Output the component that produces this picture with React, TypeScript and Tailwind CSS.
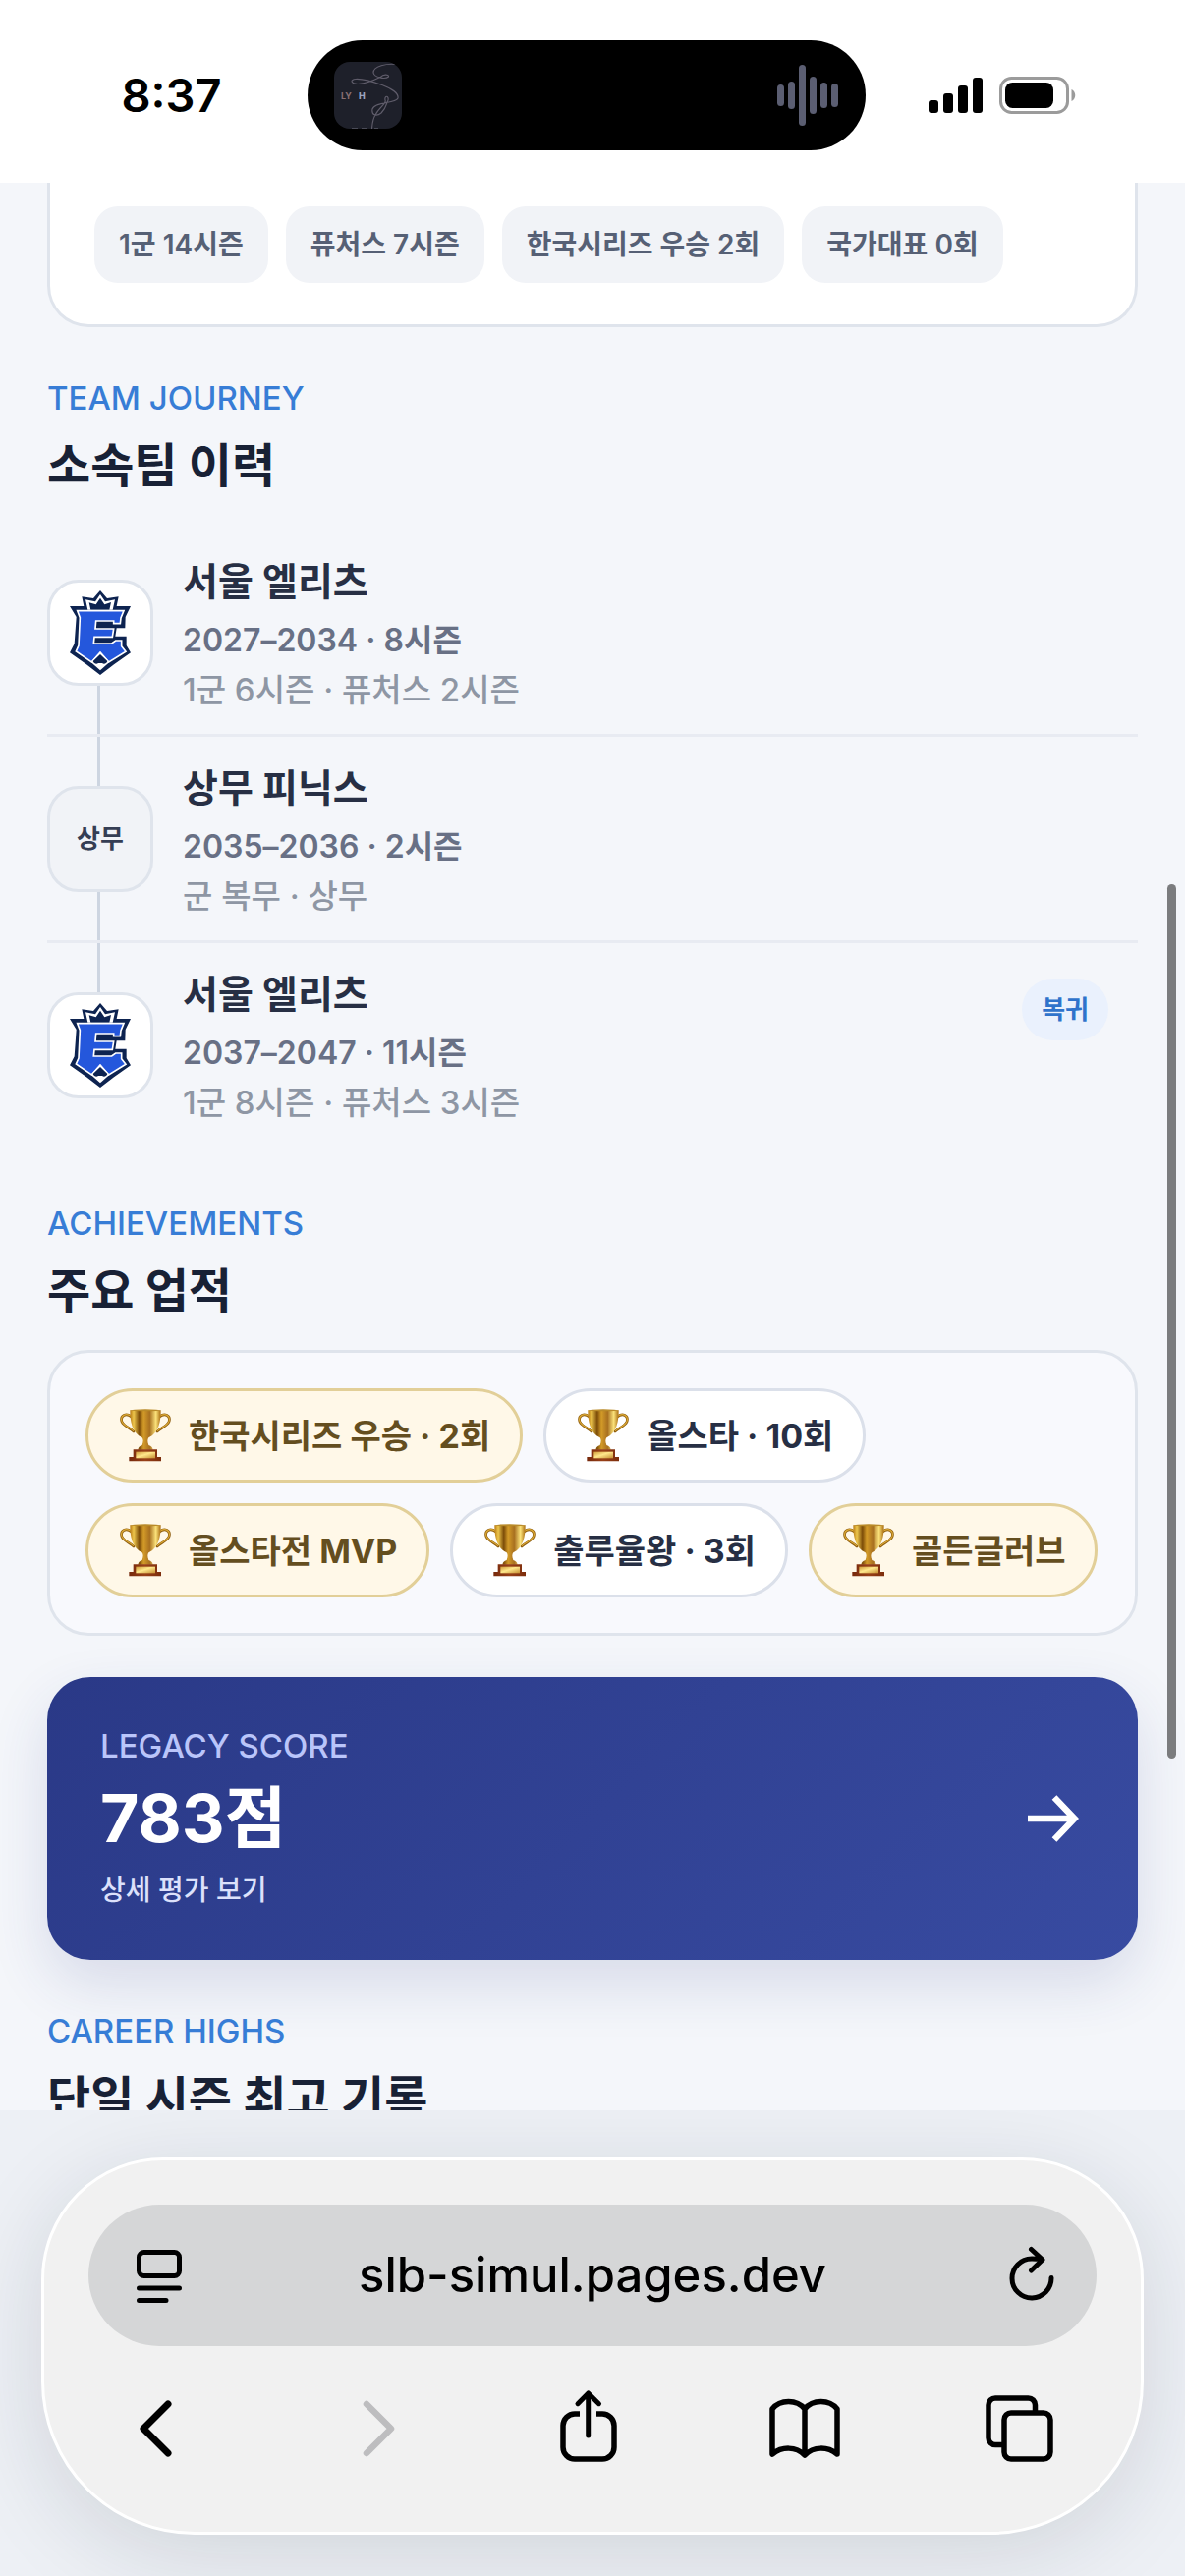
import type { ReactNode } from "react";

function AlbumArt() {
  return (
    <svg viewBox="0 0 69 68" className="h-[68px] w-[69px] rounded-2xl bg-[#1e202a]" aria-hidden="true">
      <path
        d="M63 2.5C54 1.500 40 4 40 11C41 16 52 18 55.500 15C56 12 49 13 48 15C42 18 34 22 24 22.500C17 22 16 18 22 17.500C32 17 42 21 50 24C58 27 66 32 65 37C62 43 42 40 39 48C38 54 43 56 48 52C54 46 53 42 55 39C56 34 51 34 52 39C54 42 46 46 42 54C39 59 39 63 38.500 68"
        fill="none"
        stroke="#5f5c6a"
        strokeWidth="1.200"
      />
      <text x="7" y="38" fontSize="9" fontWeight="700" fill="#8a7072">
        LY
      </text>
      <text x="25" y="38" fontSize="9" fontWeight="800" fill="#9aa2bd">
        H
      </text>
      <path d="M18 67.500h6m4 0h5m8 0h4" stroke="#4a4b57" strokeWidth="1" />
    </svg>
  );
}

function Waveform() {
  const bars = [22, 28, 62, 38, 26, 24];
  return (
    <svg viewBox="0 0 62 62" className="h-[62px] w-[62px]" aria-hidden="true">
      {bars.map((h, i) => (
        <rect key={i} x={i * 11} y={31 - h / 2} width="7" height={h} rx="3.5" fill="#5b5e72" />
      ))}
    </svg>
  );
}

function StatusBar() {
  return (
    <header className="flex h-[186px] shrink-0 items-center bg-white pt-2">
      <div className="flex flex-1 justify-center pl-9">
        <time className="text-[47px] font-semibold text-black">8:37</time>
      </div>
      <div className="flex h-28 w-[568px] items-center justify-between rounded-full bg-black pr-7 pl-[27px]">
        <AlbumArt />
        <Waveform />
      </div>
      <div className="flex flex-1 items-center justify-center gap-4 pr-12">
        <svg viewBox="0 0 56 36" className="h-9 w-14" aria-hidden="true">
          <rect x="0" y="23" width="10" height="13" rx="3" />
          <rect x="15" y="16" width="10" height="20" rx="3" />
          <rect x="30" y="8" width="10" height="28" rx="3" />
          <rect x="45" y="0" width="10" height="36" rx="3" />
        </svg>
        <svg viewBox="0 0 78 38" className="h-[38px] w-[78px]" aria-hidden="true">
          <rect x="1.500" y="1.500" width="68" height="35" rx="11" fill="none" stroke="#9b9b9b" strokeWidth="3" />
          <rect x="6" y="6" width="49" height="26" rx="7.500" />
          <path d="M73.500 13v12c5-2 5-10 0-12z" fill="#9b9b9b" />
        </svg>
      </div>
    </header>
  );
}

function ElitesLogo() {
  return (
    <svg viewBox="93 122 186 258" className="h-[86px] w-[62px]" role="img" aria-label="서울 엘리츠">
      <path
        fill="#0d2350"
        d="M186 122L207 146L242 141L236 170H279L263 203L262 237H236L232 262H266V290L279 312L228 348L186 380L144 348L93 312L107 285L113 203L93 170H136L130 141L165 146Z"
      />
      <path fill="#fff" d="M186 134L201 156L231 150L224 181H148L141 150L171 156Z" />
      <path fill="#0d2350" d="M186 145L199 165L219 158L214 181H157L152 159L173 165Z" />
      <path
        fill="#2457dc"
        stroke="#fff"
        strokeWidth="5"
        d="M116 184H258L249 206L247 223H227V215H173L171 239H227L223 264H168L166 284H221L233 275H251V292L264 309L212 341L186 312L160 341L112 308L120 290L124 205Z"
      />
      <path fill="#fff" d="M186 308L215 340L186 366L157 340Z" />
      <path fill="#0d2350" d="M186 317L208 338C205 346 197 348 192 344H180C175 348 167 346 164 338Z" />
    </svg>
  );
}

function Trophy() {
  return (
    <svg viewBox="125 104 156 162" className="h-[54px] w-[52px] shrink-0" aria-hidden="true">
      <defs>
        <linearGradient id="cup" x1="0" x2="1" y1="0" y2="0">
          <stop offset="0" stopColor="#b87a14" />
          <stop offset="0.12" stopColor="#edc64c" />
          <stop offset="0.3" stopColor="#7c4c08" />
          <stop offset="0.44" stopColor="#d39b28" />
          <stop offset="0.64" stopColor="#a87020" />
          <stop offset="0.84" stopColor="#fbe27a" />
          <stop offset="1" stopColor="#a86c10" />
        </linearGradient>
        <linearGradient id="wood" x1="0" x2="1" y1="0" y2="0">
          <stop offset="0" stopColor="#76290c" />
          <stop offset="0.5" stopColor="#984018" />
          <stop offset="1" stopColor="#7c2d0c" />
        </linearGradient>
        <linearGradient id="plate" x1="0" x2="1" y1="0" y2="1">
          <stop offset="0" stopColor="#cf9a38" />
          <stop offset="0.45" stopColor="#ffe88c" />
          <stop offset="1" stopColor="#c48c30" />
        </linearGradient>
      </defs>
      <g fill="none" strokeLinecap="round">
        <path
          d="M160 128C144 115 125 124 131 143C137 157 156 162 167 173M246 128C262 115 281 124 275 143C269 157 250 162 239 173"
          stroke="#8f5e10"
          strokeWidth="8"
        />
        <path
          d="M159 126C144 115 125 124 131 142C137 156 156 161 166 171M247 126C262 115 281 124 275 142C269 156 250 161 240 171"
          stroke="#dcaa36"
          strokeWidth="3.500"
        />
      </g>
      <path
        fill="url(#cup)"
        d="M156 108H250C250 142 244 178 213 192C209 197 209 205 213 215C221 218 225 222 226 229H180C181 222 185 218 193 215C197 205 197 197 193 192C162 178 156 142 156 108Z"
      />
      <ellipse cx="203" cy="108" rx="47" ry="3" fill="#b98a28" />
      <path d="M166 228H239V251H251V264H153V251H166Z" fill="url(#wood)" />
      <rect x="174" y="235" width="59" height="20" fill="url(#plate)" />
    </svg>
  );
}

function SectionHeading({ eyebrow, title }: { eyebrow: string; title: string }) {
  return (
    <div className="flex flex-col gap-[17px]">
      <p className="text-[33px] leading-10 font-medium text-[#377dd6]">{eyebrow}</p>
      <h2 className="text-5xl leading-[64px] font-bold whitespace-nowrap text-[#182135]">{title}</h2>
    </div>
  );
}

type Stint = { team: string; years: string; detail: string; logo: ReactNode; plain?: boolean; badge?: string };

const stints: Stint[] = [
  { team: "서울 엘리츠", years: "2027–2034 · 8시즌", detail: "1군 6시즌 · 퓨처스 2시즌", logo: <ElitesLogo /> },
  {
    team: "상무 피닉스",
    years: "2035–2036 · 2시즌",
    detail: "군 복무 · 상무",
    logo: <span className="text-[26px] font-bold text-[#353e54]">상무</span>,
    plain: true,
  },
  {
    team: "서울 엘리츠",
    years: "2037–2047 · 11시즌",
    detail: "1군 8시즌 · 퓨처스 3시즌",
    logo: <ElitesLogo />,
    badge: "복귀",
  },
];

function Timeline() {
  return (
    <ol className="mt-[34px]">
      {stints.map((s, i) => {
        const first = i === 0;
        const last = i === stints.length - 1;
        return (
          <li key={s.years} className={last ? "flex gap-[30px]" : "flex gap-[30px] border-b-3 border-[#e8ebf2]"}>
            <div className="flex w-[108px] shrink-0 flex-col">
              <div className={first ? "ml-[51px] w-[3px] flex-1" : "ml-[51px] w-[3px] flex-1 bg-[#cdd5e1]"} />
              <div
                className={
                  s.plain
                    ? "flex size-[108px] items-center justify-center rounded-[32px] border-3 border-[#dfe4ec] bg-[#f1f3f7]"
                    : "flex size-[108px] items-center justify-center rounded-[32px] border-3 border-[#dfe4ec] bg-white"
                }
              >
                {s.logo}
              </div>
              <div className={last ? "ml-[51px] w-[3px] flex-1" : "ml-[51px] w-[3px] flex-1 bg-[#cdd5e1]"} />
            </div>
            <div className="min-w-0 flex-1 pt-6 pb-5">
              <h3 className="mb-[7px] text-[39px] leading-[56px] font-bold text-[#272f44]">{s.team}</h3>
              <p className="text-[32px] leading-[50px] font-semibold text-[#687085]">{s.years}</p>
              <p className="text-[33px] leading-[50px] font-medium text-[#8e96a4]">{s.detail}</p>
            </div>
            {s.badge && (
              <span className="mt-9 mr-[30px] flex h-[63px] items-center self-start rounded-full bg-[#eaf1fd] px-5 text-[26px] font-bold text-[#2f73cb]">
                {s.badge}
              </span>
            )}
          </li>
        );
      })}
    </ol>
  );
}

const awards = [
  { label: "한국시리즈 우승 · 2회", gold: true },
  { label: "올스타 · 10회", gold: false },
  { label: "올스타전 MVP", gold: true },
  { label: "출루율왕 · 3회", gold: false },
  { label: "골든글러브", gold: true },
];

function Achievements() {
  return (
    <ul className="mt-7 flex flex-wrap gap-[21px] rounded-[42px] border-3 border-[#dfe4ec] bg-[#f8f9fd] py-9 pr-8 pl-9">
      {awards.map((a) => (
        <li
          key={a.label}
          className={
            a.gold
              ? "flex h-24 items-center gap-[18px] rounded-full border-3 border-[#e2cf98] bg-[#fff8e8] pr-[30px] pl-8 text-[34px] font-bold whitespace-nowrap text-[#644e1f]"
              : "flex h-24 items-center gap-[18px] rounded-full border-3 border-[#dbe0ea] bg-white pr-[30px] pl-8 text-[34px] font-bold whitespace-nowrap text-[#272f44]"
          }
        >
          <Trophy />
          {a.label}
        </li>
      ))}
    </ul>
  );
}

function LegacyCard() {
  return (
    <button
      type="button"
      className="mt-[42px] flex w-full items-center justify-between rounded-[44px] bg-linear-135 from-[#2a3987] to-[#384ba1] py-[50px] pr-[60px] pl-[54px] text-left shadow-[0_24px_60px_rgba(43,58,136,0.14)]"
    >
      <span className="flex flex-col">
        <span className="text-[33px] leading-10 font-medium text-[#bac5fa]">LEGACY SCORE</span>
        <span className="my-[14px] text-[68px] leading-[78px] font-bold text-white">783점</span>
        <span className="text-[28px] leading-[42px] font-medium text-[#dce1fb]">상세 평가 보기</span>
      </span>
      <svg viewBox="0 0 52 48" className="h-12 w-[52px]" fill="none" stroke="#fff" strokeWidth="6.500" aria-hidden="true">
        <path d="M0 24H47M27 2.500L47.500 24L27 45.500" />
      </svg>
    </button>
  );
}

const summary = ["1군 14시즌", "퓨처스 7시즌", "한국시리즈 우승 2회", "국가대표 0회"];

function IconButton({ label, disabled, children }: { label: string; disabled?: boolean; children: ReactNode }) {
  return (
    <button type="button" aria-label={label} disabled={disabled} className="size-24 shrink-0 text-black disabled:text-[#bdbdbf]">
      <svg
        viewBox="0 0 96 96"
        className="size-24"
        fill="none"
        stroke="currentColor"
        strokeWidth="5.500"
        strokeLinecap="round"
        strokeLinejoin="round"
        aria-hidden="true"
      >
        {children}
      </svg>
    </button>
  );
}

function BrowserBar() {
  return (
    <footer className="shrink-0 overflow-hidden bg-[#edf0f5] px-[42px] pt-12 pb-[42px]">
      <div className="rounded-t-[124px] rounded-b-[156px] border-3 border-white bg-[#f1f1f1] px-[45px] pt-[45px] pb-[57px] shadow-[0_20px_90px_rgba(20,30,45,0.13)]">
        <div className="flex h-36 items-center justify-between rounded-full bg-[#d5d6d7] px-[18px]">
          <IconButton label="페이지 메뉴">
            <rect x="33.500" y="24.500" width="41" height="24" rx="5" strokeWidth="5" />
            <path d="M33.500 61H74.500M33.500 73.500H61" strokeWidth="5" />
          </IconButton>
          <button type="button" className="text-[49px] leading-[60px] font-medium text-black">
            slb-simul.pages.dev
          </button>
          <IconButton label="새로고침">
            <path d="M68 50.500A20 20 0 1 1 48 31C52 31 55 31.300 58 32M47.500 21.500L59 32L47.500 43" strokeWidth="5" />
          </IconButton>
        </div>
        <nav className="mt-9 flex justify-between pr-[30px] pl-5">
          <IconButton label="뒤로">
            <path d="M61 23L36 48L61 73" strokeWidth="7" />
          </IconButton>
          <IconButton label="앞으로" disabled>
            <path d="M43 23L68 48L43 73" strokeWidth="6.500" />
          </IconButton>
          <IconButton label="공유">
            <path d="M40 33H35A12 12 0 0 0 23 45V67A12 12 0 0 0 35 79H63A12 12 0 0 0 75 67V45A12 12 0 0 0 63 33H57" strokeLinecap="butt" />
            <path d="M48.700 12V55M38 22.700L48.700 12L59.500 22.700" strokeWidth="5" />
          </IconButton>
          <IconButton label="책갈피">
            <path d="M16 28C24 18 41 18 49 28C57 18 74 18 82 28V74C72 66 58 66 49 75C40 66 26 66 16 74ZM49 28V75" />
          </IconButton>
          <IconButton label="탭">
            <rect x="32" y="32" width="47" height="47" rx="7" />
            <path
              d="M63.500 30V24A7 7 0 0 0 56.500 17H23A7 7 0 0 0 16 24V57.500A7 7 0 0 0 23 64.500H30"
              strokeLinecap="butt"
            />
          </IconButton>
        </nav>
      </div>
    </footer>
  );
}

export default function App() {
  return (
    <div className="flex h-screen flex-col overflow-hidden bg-[#f4f6fa] font-['Inter','Noto_Sans_CJK_KR',sans-serif]">
      <StatusBar />
      <main className="relative min-h-0 flex-1 overflow-hidden px-12">
        <ul className="flex flex-wrap gap-[18px] rounded-b-[42px] border-3 border-t-0 border-[#dfe4ec] bg-white px-[45px] pt-6 pb-[42px]">
          {summary.map((label) => (
            <li
              key={label}
              className="flex h-[78px] items-center rounded-3xl bg-[#f1f3f7] px-[25px] text-[28px] font-semibold whitespace-nowrap text-[#566075]"
            >
              {label}
            </li>
          ))}
        </ul>
        <section className="mt-[52px]">
          <SectionHeading eyebrow="TEAM JOURNEY" title="소속팀 이력" />
          <Timeline />
        </section>
        <section className="mt-[58px]">
          <SectionHeading eyebrow="ACHIEVEMENTS" title="주요 업적" />
          <Achievements />
        </section>
        <LegacyCard />
        <section className="mt-[52px]">
          <SectionHeading eyebrow="CAREER HIGHS" title="단일 시즌 최고 기록" />
        </section>
        <div className="absolute top-[714px] right-[9px] h-[890px] w-[9px] rounded-full bg-[#7b7c7e]" />
      </main>
      <BrowserBar />
    </div>
  );
}
